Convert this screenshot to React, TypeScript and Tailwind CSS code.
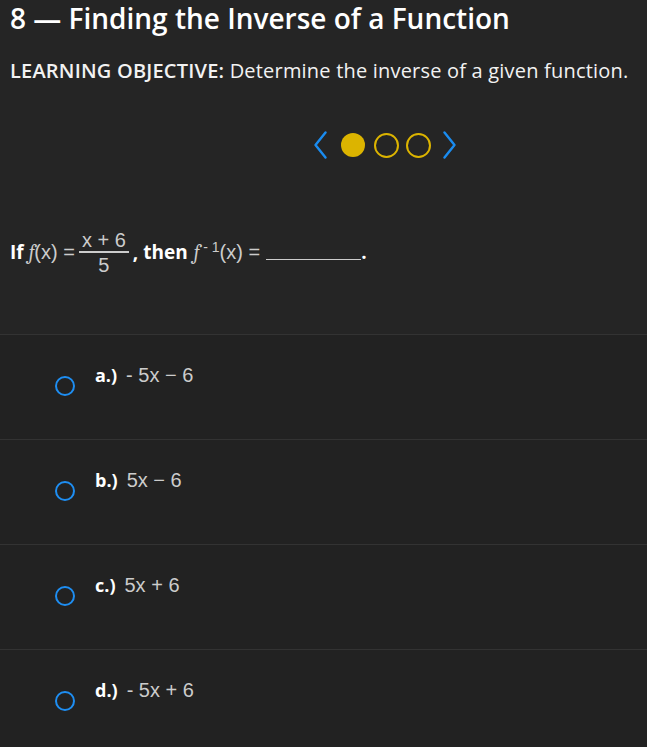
const options = [
    { label: 'a.)', expr: <>-&nbsp;5x − 6</> },
    { label: 'b.)', expr: <>5x − 6</> },
    { label: 'c.)', expr: <>5x + 6</> },
    { label: 'd.)', expr: <>-&nbsp;5x + 6</> },
]

const math = { fontFamily: '"Liberation Sans", Arial, sans-serif' }

function Chevron({ dir }: { dir: 'left' | 'right' }) {
    return (
        <svg width="13" height="28" viewBox="0 0 13 28" fill="none" className="text-[#1a8cf0]">
            <polyline
                points={dir === 'left' ? '11.5,1.5 1.5,14 11.5,26.5' : '1.5,1.5 11.5,14 1.5,26.5'}
                stroke="currentColor"
                strokeWidth="2.4"
                strokeLinecap="round"
                strokeLinejoin="round"
            />
        </svg>
    )
}

export default function App() {
    return (
        <div className="min-h-[747px] w-[647px] bg-[#222222] text-white" style={{ fontFamily: '"Open Sans", Lato, sans-serif' }}>
            <div className="bg-[#252525] h-[335px] border-b border-[#333333] px-[10px]">
                <h1 className="pt-[1px] text-[28px] font-semibold leading-[34px]">
                    8 — Finding the Inverse of a Function
                </h1>
                <p className="mt-[23px] text-[20px] leading-[26px] text-[#f2f2f2] tracking-[0.2px]">
                    <span className="font-semibold">LEARNING OBJECTIVE:</span> Determine the inverse of a given function.
                </p>

                <div className="mt-[47px] flex items-center justify-center pl-[122px]">
                    <Chevron dir="left" />
                    <span className="ml-[14px] w-[24px] h-[24px] rounded-full bg-[#dcb400]" />
                    <span className="ml-[9px] w-[25px] h-[25px] rounded-full border-2 border-[#dcb400]" />
                    <span className="ml-[7px] w-[25px] h-[25px] rounded-full border-2 border-[#dcb400]" />
                    <span className="ml-[12px]"><Chevron dir="right" /></span>
                </div>

                <div className="mt-[70px] flex items-center text-[19px]">
                    <span className="font-bold">If</span>
                    <span className="ml-[5px] text-[#cccccc] text-[20px]" style={math}>
                        <i className="font-serif">f</i>(x) =
                    </span>
                    <span className="mx-[4px] inline-flex flex-col items-center text-[#cccccc] text-[20px] leading-[22px]" style={math}>
                        <span className="px-[3px]">x + 6</span>
                        <span className="w-full h-[2px] bg-[#cccccc]" />
                        <span className="mt-[1px]">5</span>
                    </span>
                    <span className="font-bold">, then</span>
                    <span className="ml-[6px] text-[#cccccc] text-[20px]" style={math}>
                        <i className="font-serif">f</i>
                        <sup className="text-[14px]">&nbsp;- 1</sup>(x) =
                    </span>
                    <span className="ml-[6px] w-[95px] border-b border-[#cccccc] translate-y-[7px]" />
                    <span className="font-bold">.</span>
                </div>
            </div>

            {options.map((o, i) => (
                <div
                    key={o.label}
                    className={`h-[105px] flex ${i < 3 ? 'border-b border-[#333333]' : ''}`}
                >
                    <div className="pl-[55px] pt-[41px]">
                        <span className="block w-[20px] h-[20px] rounded-full border-2 border-[#1e8ef2]" />
                    </div>
                    <div className="ml-[20px] pt-[25px] flex items-baseline gap-[9px] text-[18px]">
                        <span className="font-bold">{o.label}</span>
                        <span className="text-[#cccccc] text-[20px]" style={math}>{o.expr}</span>
                    </div>
                </div>
            ))}
        </div>
    )
}
